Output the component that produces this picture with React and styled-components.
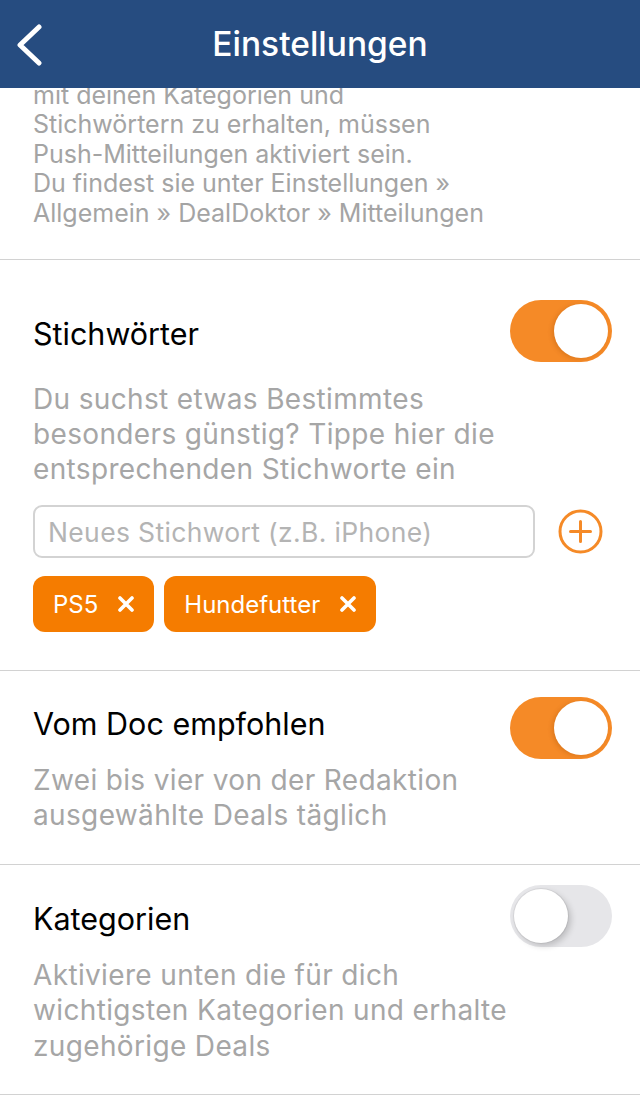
import React, { useState } from 'react'
import styled, { createGlobalStyle } from 'styled-components'

const GlobalStyle = createGlobalStyle`
  body {
    margin: 0;
    background: #ffffff;
    font-family: Inter, "Noto Sans", "Liberation Sans", sans-serif;
  }
`

const ChevronLeft = () => (
  <svg width="26" height="42" viewBox="0 0 26 42" fill="none">
    <path d="M23 3 L4 21 L23 39" stroke="#ffffff" strokeWidth="5" strokeLinecap="round" strokeLinejoin="round" />
  </svg>
)

const PlusCircle = () => (
  <svg width="45" height="45" viewBox="0 0 45 45" fill="none">
    <circle cx="22.5" cy="22.5" r="20.5" stroke="#f58a27" strokeWidth="3" />
    <path d="M12.5 22.5 H32.5 M22.5 12.5 V32.5" stroke="#f58a27" strokeWidth="3" strokeLinecap="round" />
  </svg>
)

const CrossIcon = () => (
  <svg width="16" height="16" viewBox="0 0 16 16" fill="none">
    <path d="M2 2 L14 14 M14 2 L2 14" stroke="#ffffff" strokeWidth="3.6" strokeLinecap="round" />
  </svg>
)

const App = () => {
  const [keywords, setKeywords] = useState(true)
  const [recommended, setRecommended] = useState(true)
  const [categories, setCategories] = useState(false)
  const [tags, setTags] = useState(['PS5', 'Hundefutter'])
  const [draft, setDraft] = useState('')

  const addTag = () => {
    if (!draft.trim()) return
    setTags(prev => [...prev, draft.trim()])
    setDraft('')
  }

  const removeTag = (tag) => {
    setTags(prev => prev.filter(t => t !== tag))
  }

  return (
    <Screen>
      <GlobalStyle />
      <Header>
        <BackButton aria-label="Zurück"><ChevronLeft /></BackButton>
        <Title>Einstellungen</Title>
        <span />
      </Header>

      <Scroller>
        <Content>
          <Section $pt={0} $pb={31}>
            <Intro>
              Um passende Deals zu deinen Themen<br />
              mit deinen Kategorien und<br />
              Stichwörtern zu erhalten, müssen<br />
              Push-Mitteilungen aktiviert sein.<br />
              Du findest sie unter Einstellungen »<br />
              Allgemein » DealDoktor » Mitteilungen
            </Intro>
          </Section>

          <Section $pt={40} $pb={38}>
            <Row>
              <RowTitle $shift={2}>Stichwörter</RowTitle>
              <Toggle $on={keywords} onClick={() => setKeywords(v => !v)}><Knob $on={keywords} /></Toggle>
            </Row>
            <Description $mt={19.5} $lh={35}>
              Du suchst etwas Bestimmtes<br />
              besonders günstig? Tippe hier die<br />
              entsprechenden Stichworte ein
            </Description>
            <InputRow>
              <KeywordInput
                placeholder="Neues Stichwort (z.B. iPhone)"
                value={draft}
                onChange={e => setDraft(e.target.value)}
              />
              <AddButton onClick={addTag} aria-label="Hinzufügen"><PlusCircle /></AddButton>
            </InputRow>
            <Chips>
              {tags.map(tag => (
                <Chip key={tag}>
                  {tag}
                  <ChipRemove onClick={() => removeTag(tag)} aria-label="Entfernen"><CrossIcon /></ChipRemove>
                </Chip>
              ))}
            </Chips>
          </Section>

          <Section $pt={26} $pb={31.5}>
            <Row>
              <RowTitle $shift={-5}>Vom Doc empfohlen</RowTitle>
              <Toggle $on={recommended} onClick={() => setRecommended(v => !v)}><Knob $on={recommended} /></Toggle>
            </Row>
            <Description $mt={3.5} $lh={35}>
              Zwei bis vier von der Redaktion<br />
              ausgewählte Deals täglich
            </Description>
          </Section>

          <Section $pt={20} $pb={30}>
            <Row>
              <RowTitle $shift={2}>Kategorien</RowTitle>
              <Toggle $on={categories} onClick={() => setCategories(v => !v)}><Knob $on={categories} /></Toggle>
            </Row>
            <Description $mt={10.5} $lh={35.5}>
              Aktiviere unten die für dich<br />
              wichtigsten Kategorien und erhalte<br />
              zugehörige Deals
            </Description>
          </Section>
        </Content>
      </Scroller>
    </Screen>
  )
}

export default App

const Screen = styled.div`
  width: 640px;
  height: 1096px;
  display: flex;
  flex-direction: column;
  overflow: hidden;
  background: #ffffff;
`

const Header = styled.header`
  position: relative;
  z-index: 1;
  height: 88px;
  flex-shrink: 0;
  background: #264c80;
  display: grid;
  grid-template-columns: 1fr auto 1fr;
  align-items: center;
`

const BackButton = styled.button`
  justify-self: start;
  background: none;
  border: none;
  padding: 0 0 0 16px;
  margin-top: 2px;
  display: flex;
  cursor: pointer;
`

const Title = styled.h1`
  margin: 0;
  color: #ffffff;
  font-size: 33.5px;
  font-weight: 500;
`

const Scroller = styled.main`
  flex: 1;
  overflow: hidden;
`

const Content = styled.div`
  margin-top: -37px;
`

const Section = styled.section`
  padding: ${p => p.$pt}px 28px ${p => p.$pb}px 33px;
  border-bottom: 1px solid #d2d2d2;
`

const Intro = styled.p`
  margin: 0;
  font-size: 25px;
  line-height: 29.5px;
  color: #a4a4a4;
`

const Row = styled.div`
  height: 62px;
  display: flex;
  align-items: center;
  justify-content: space-between;
`

const RowTitle = styled.h2`
  margin: 0;
  font-size: 30.5px;
  font-weight: 400;
  color: #000000;
  padding: ${p => (p.$shift > 0 ? `${p.$shift * 2}px 0 0` : `0 0 ${-p.$shift * 2}px`)};
`

const Toggle = styled.button`
  width: 102px;
  height: 62px;
  border-radius: 31px;
  border: none;
  padding: 4px;
  display: flex;
  align-items: center;
  justify-content: ${p => (p.$on ? 'flex-end' : 'flex-start')};
  background: ${p => (p.$on ? '#f58a27' : '#e6e6e9')};
  cursor: pointer;
`

const Knob = styled.span`
  width: 54px;
  height: 54px;
  border-radius: 50%;
  background: #ffffff;
  box-shadow: ${p => (p.$on
    ? '-2px 1px 4px rgba(150, 70, 0, 0.25)'
    : '0 0 0 1px rgba(0, 0, 0, 0.06), 3px 3px 6px rgba(0, 0, 0, 0.18)')};
`

const Description = styled.p`
  margin: ${p => p.$mt}px 0 0;
  font-size: 28px;
  letter-spacing: 0.35px;
  line-height: ${p => p.$lh}px;
  color: #a6a6a6;
`

const InputRow = styled.div`
  margin-top: 18.5px;
  display: flex;
  align-items: center;
`

const KeywordInput = styled.input`
  box-sizing: border-box;
  width: 502px;
  height: 53px;
  border: 2px solid #d3d3d3;
  border-radius: 9px;
  padding: 0 13px;
  font-family: inherit;
  font-size: 26.5px;
  letter-spacing: 0.35px;
  color: #333333;
  outline: none;
  &::placeholder {
    color: #b4b4b4;
  }
`

const AddButton = styled.button`
  margin-left: 23px;
  background: none;
  border: none;
  padding: 0;
  display: flex;
  cursor: pointer;
`

const Chips = styled.div`
  margin-top: 18px;
  display: flex;
  gap: 10px;
`

const Chip = styled.div`
  height: 56px;
  padding: 0 20px;
  border-radius: 12px;
  background: #f57c00;
  color: #ffffff;
  font-size: 24px;
  display: flex;
  align-items: center;
  gap: 20px;
`

const ChipRemove = styled.button`
  background: none;
  border: none;
  padding: 0;
  display: flex;
  cursor: pointer;
`
